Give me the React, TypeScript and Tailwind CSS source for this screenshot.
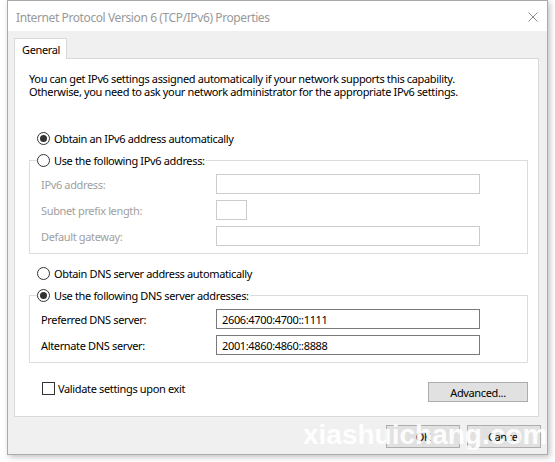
import React from "react"

const ui = "font-['Segoe_UI','Noto_Sans',sans-serif]"

function Radio({ checked }: { checked?: boolean }) {
    return (
        <span className="w-[13px] h-[13px] rounded-full border border-[#333333] bg-white flex items-center justify-center shrink-0">
            {checked && <span className="w-[7px] h-[7px] rounded-full bg-[#333333]" />}
        </span>
    )
}

function RadioRow({ label, checked }: { label: string; checked?: boolean }) {
    return (
        <div className="flex items-center gap-[4px] h-[13px] leading-[13px] text-black">
            <Radio checked={checked} />
            <span className="bg-white pr-[1px]">{label}</span>
        </div>
    )
}

function Field({ label, value, disabled, narrow }: { label: string; value?: string; disabled?: boolean; narrow?: boolean }) {
    return (
        <div className="flex items-center h-[20px]">
            <span className={`w-[186px] pl-[11px] ${disabled ? "text-[#a0a0a0]" : "text-black"}`}>{label}</span>
            <div
                className={`h-[20px] bg-white border flex items-center pl-[5px] ${narrow ? "w-[31px]" : "w-[264px]"} ${disabled ? "border-[#cccccc]" : "border-[#7a7a7a]"}`}
            >
                {value}
            </div>
        </div>
    )
}

export default function App() {
    return (
        <div className={`relative w-[555px] h-[462px] bg-white pl-[7px] ${ui} text-[11px] leading-[13px] tracking-[-0.35px]`}>
            {/* Dialog window */}
            <div className="w-[541px] h-[455px] border border-[#aaaaaa] flex flex-col shadow-[2px_2px_6px_rgba(0,0,0,0.25)]">
                {/* Title bar */}
                <div className="h-[30px] bg-white flex items-center justify-between pl-[8px] pr-[9px]">
                    <span className="text-[12px] tracking-[-0.4px] text-[#999999] pt-[2px]">Internet Protocol Version 6 (TCP/IPv6) Properties</span>
                    <svg width="10" height="10" viewBox="0 0 10 10" className="mt-[1px]">
                        <path d="M0.5 0.5 L9.5 9.5 M9.5 0.5 L0.5 9.5" stroke="#8a8a8a" strokeWidth="1" fill="none" />
                    </svg>
                </div>

                {/* Body */}
                <div className="flex-1 bg-[#f0f0f0] pt-[7px] pl-[6px] pr-[8px]">
                    <div className="relative z-10 w-[53px] h-[21px] -mb-[1px] bg-white border border-b-0 border-[#d9d9d9] pl-[7px] flex items-center text-black">
                        General
                    </div>

                    {/* Tab panel */}
                    <div className="h-[359px] bg-white border border-[#d9d9d9] pl-[14px] pr-[10px] flex flex-col">
                        <p className="mt-[13px] text-black">
                            You can get IPv6 settings assigned automatically if your network supports this capability.
                            <br />
                            Otherwise, you need to ask your network administrator for the appropriate IPv6 settings.
                        </p>

                        <div className="mt-[34px] ml-[8px]">
                            <RadioRow label="Obtain an IPv6 address automatically" checked />
                        </div>

                        <fieldset className="mt-[9px] border border-[#dcdcdc] pb-[7px]">
                            <legend className="ml-[7px]">
                                <RadioRow label="Use the following IPv6 address:" />
                            </legend>
                            <div className="pt-[7px] flex flex-col gap-[6px]">
                                <Field label="IPv6 address:" disabled />
                                <Field label="Subnet prefix length:" disabled narrow />
                                <Field label="Default gateway:" disabled />
                            </div>
                        </fieldset>

                        <div className="mt-[13px] ml-[8px]">
                            <RadioRow label="Obtain DNS server address automatically" />
                        </div>

                        <fieldset className="mt-[9px] border border-[#dcdcdc] pb-[7px]">
                            <legend className="ml-[7px]">
                                <RadioRow label="Use the following DNS server addresses:" checked />
                            </legend>
                            <div className="pt-[7px] flex flex-col gap-[6px]">
                                <Field label="Preferred DNS server:" value="2606:4700:4700::1111" />
                                <Field label="Alternate DNS server:" value="2001:4860:4860::8888" />
                            </div>
                        </fieldset>

                        <div className="mt-[19px] flex items-start justify-between">
                            <div className="ml-[13px] flex items-center gap-[3px] h-[13px]">
                                <span className="w-[13px] h-[13px] border border-[#333333] bg-white shrink-0" />
                                <span className="text-black">Validate settings upon exit</span>
                            </div>
                            <button className="w-[100px] h-[20px] bg-[#e1e1e1] border border-[#adadad] text-black flex items-center justify-center">
                                Advanced...
                            </button>
                        </div>
                    </div>

                    {/* Dialog buttons */}
                    <div className="mt-[8px] -mr-[2px] flex justify-end gap-[7px]">
                        <button className="w-[74px] h-[23px] bg-[#e1e1e1] border border-[#adadad] text-black flex items-center justify-center">
                            OK
                        </button>
                        <button className="w-[74px] h-[23px] bg-[#e1e1e1] border border-[#adadad] text-black flex items-center justify-center">
                            Cancel
                        </button>
                    </div>
                </div>
            </div>

            {/* Watermark */}
            <div className="absolute left-[303px] top-[421px] font-['Liberation_Sans',sans-serif] font-bold text-[28px] leading-[28px] tracking-normal text-white/90 whitespace-nowrap">
                xiashuichang.com
            </div>
        </div>
    )
}
